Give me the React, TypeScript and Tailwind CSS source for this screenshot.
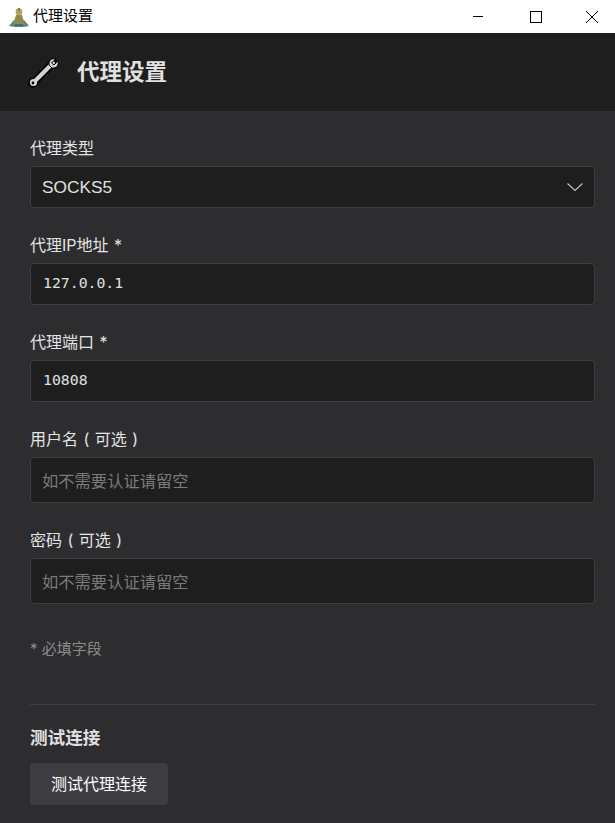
import React from 'react';

const CJK = "font-['Inter','Noto_Sans_CJK_SC',sans-serif]";
const MONO = "font-['DejaVu_Sans_Mono',monospace]";

function Field({ label, children, className }: { label: string; children: React.ReactNode; className?: string }) {
  return (
    <div className={className}>
      <label className="block h-[19px] text-[16px] leading-[21px] [word-spacing:1px] text-[#e4e4e4]">{label}</label>
      {children}
    </div>
  );
}

export default function App() {
  return (
    <div className={`w-[615px] h-[823px] overflow-hidden bg-[#2d2d30] ${CJK}`}>
      {/* Window title bar */}
      <div className="h-[33px] bg-white flex items-center">
        <svg className="ml-[9px]" width="20" height="22" viewBox="0 0 20 22">
          <path d="M0 20 L5 14 L15 14 L20 20 L14 21 L6 21 Z" fill="#5f7f78" />
          <path d="M4 19 L7 9 L13 9 L16 19 Z" fill="#8a8d4a" />
          <circle cx="10" cy="6" r="3.4" fill="#b9a25c" />
          <path d="M9 2 h2 v3 h-2 Z" fill="#8c7a3f" />
          <path d="M6 18 h8 v2 h-8 Z" fill="#2f6f8f" />
        </svg>
        <span className="ml-[4px] text-[15px] text-black">代理设置</span>
        <div className="ml-auto flex items-center">
          <div className="w-[46px] flex justify-center">
            <div className="w-[10px] h-px bg-black" />
          </div>
          <div className="w-[46px] ml-[12px] flex justify-center">
            <div className="w-[12px] h-[12px] border border-black" />
          </div>
          <div className="w-[46px] ml-[10px] flex justify-center">
            <svg width="14" height="14" viewBox="0 0 14 14" stroke="#000" strokeWidth="1" fill="none">
              <path d="M1 1 L13 13 M13 1 L1 13" />
            </svg>
          </div>
        </div>
      </div>

      {/* Header */}
      <div className="h-[78px] bg-[#1e1e1e] flex items-center pl-[28px]">
        <svg width="32" height="32" viewBox="0 0 32 32">
          <path d="M4 28 L26 6" stroke="#000" strokeWidth="7.5" strokeLinecap="round" />
          <circle cx="5.5" cy="26.5" r="5" fill="#000" />
          <path d="M6 26 L25 7" stroke="#d4d4d4" strokeWidth="4" strokeLinecap="round" />
          <circle cx="5.5" cy="26.5" r="3.6" fill="#d4d4d4" />
          <circle cx="5" cy="27" r="1.4" fill="#000" />
          <path d="M30 5 L26 9 L23.5 7 L27.5 3 C23.5 1.5 20 5 21.2 9.2 L24 12 C28.5 12.5 31 9.5 30 5 Z" fill="#d4d4d4" stroke="#000" strokeWidth="1" />
        </svg>
        <h1 className="ml-[17px] text-[22.5px] font-bold text-[#e0e0e0]">代理设置</h1>
      </div>

      {/* Form */}
      <div className="pl-[30px] pr-[20px] pt-[27px]">
        <Field label="代理类型">
          <div className="relative mt-[9px]">
            <select className="w-full h-[42px] appearance-none bg-[#1e1e1e] border border-[#3e3e42] rounded-[4px] pl-[11px] pt-[2px] font-['Liberation_Sans',sans-serif] text-[17.3px] text-[#e0e0e0] outline-none" defaultValue="SOCKS5">
              <option>SOCKS5</option>
              <option>SOCKS4</option>
              <option>HTTP</option>
            </select>
            <svg className="absolute right-[12px] top-[17px]" width="16" height="9" viewBox="0 0 16 9" fill="none" stroke="#c0c0c0" strokeWidth="1.2">
              <path d="M0.5 0.5 L8 7.5 L15.5 0.5" />
            </svg>
          </div>
        </Field>
        <Field label="代理IP地址 *" className="mt-[27px]">
          <input defaultValue="127.0.0.1" className={`mt-[9px] block w-full h-[42px] bg-[#1e1e1e] border border-[#3e3e42] rounded-[4px] px-[12px] pb-[4px] ${MONO} text-[14.8px] text-[#e0e0e0] outline-none`} />
        </Field>
        <Field label="代理端口 *" className="mt-[27px]">
          <input defaultValue="10808" className={`mt-[9px] block w-full h-[42px] bg-[#1e1e1e] border border-[#3e3e42] rounded-[4px] px-[12px] pb-[4px] ${MONO} text-[14.8px] text-[#e0e0e0] outline-none`} />
        </Field>
        <Field label="用户名 ( 可选 )" className="mt-[27px]">
          <input placeholder="如不需要认证请留空" className="mt-[9px] block w-full h-[46px] bg-[#1e1e1e] border border-[#3e3e42] rounded-[4px] px-[11px] pt-[2px] text-[16.3px] text-[#e0e0e0] placeholder:text-[#7a7a7a] outline-none" />
        </Field>
        <Field label="密码 ( 可选 )" className="mt-[27px]">
          <input placeholder="如不需要认证请留空" className="mt-[9px] block w-full h-[46px] bg-[#1e1e1e] border border-[#3e3e42] rounded-[4px] px-[11px] pt-[2px] text-[16.3px] text-[#e0e0e0] placeholder:text-[#7a7a7a] outline-none" />
        </Field>
        <p className="mt-[35px] h-[19px] text-[15px] leading-[19px] text-[#8c8c8c]">* 必填字段</p>
        <div className="mt-[46px] border-t border-[#3e3e42]" />
        <h2 className="mt-[20px] h-[25px] text-[17.6px] leading-[25px] font-bold text-[#e0e0e0]">测试连接</h2>
        <button className="mt-[13px] block w-[138px] h-[42px] bg-[#3e3e42] rounded-[4px] text-[16px] text-white">测试代理连接</button>
      </div>
    </div>
  );
}
